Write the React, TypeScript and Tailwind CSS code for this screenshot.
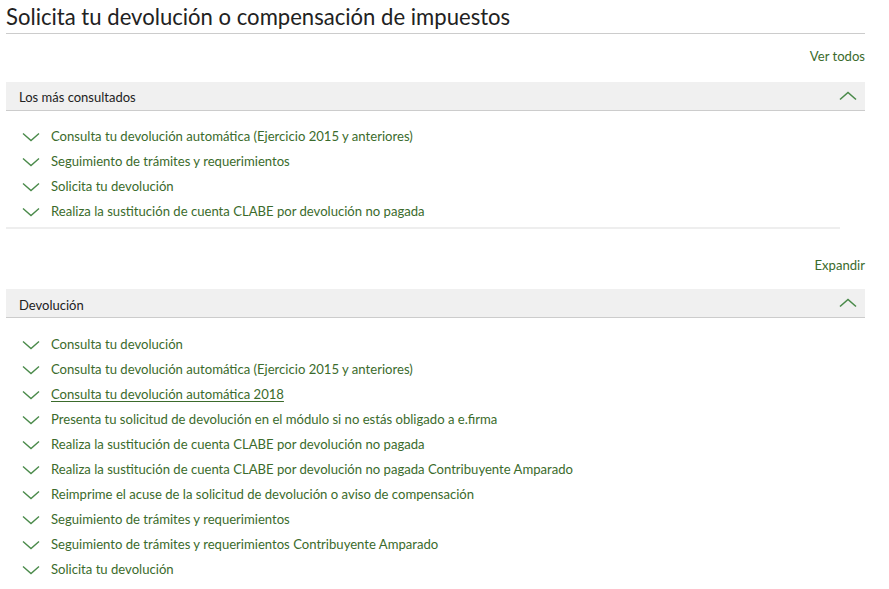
const masConsultados = [
  'Consulta tu devolución automática (Ejercicio 2015 y anteriores)',
  'Seguimiento de trámites y requerimientos',
  'Solicita tu devolución',
  'Realiza la sustitución de cuenta CLABE por devolución no pagada',
];

const devolucion = [
  'Consulta tu devolución',
  'Consulta tu devolución automática (Ejercicio 2015 y anteriores)',
  'Consulta tu devolución automática 2018',
  'Presenta tu solicitud de devolución en el módulo si no estás obligado a e.firma',
  'Realiza la sustitución de cuenta CLABE por devolución no pagada',
  'Realiza la sustitución de cuenta CLABE por devolución no pagada Contribuyente Amparado',
  'Reimprime el acuse de la solicitud de devolución o aviso de compensación',
  'Seguimiento de trámites y requerimientos',
  'Seguimiento de trámites y requerimientos Contribuyente Amparado',
  'Solicita tu devolución',
];

function ChevronDown() {
  return (
    <svg width="18" height="10" viewBox="0 0 18 10" className="shrink-0">
      <path d="M1 1.5 L9 8.5 L17 1.5" fill="none" stroke="#4a8a4a" strokeWidth="1.4" />
    </svg>
  );
}

function ChevronUp() {
  return (
    <svg width="18" height="10" viewBox="0 0 18 10">
      <path d="M1 8.5 L9 1.5 L17 8.5" fill="none" stroke="#4a8a4a" strokeWidth="1.6" />
    </svg>
  );
}

function Section({ title, items, underline }: { title: string; items: string[]; underline?: number }) {
  return (
    <div>
      <div className="flex items-center justify-between h-[29px] bg-[#f0f0f0] border-b border-[#cccccc] pl-[13px] pr-[8px]">
        <span className="mt-[5px] text-[13px] text-[#222]">{title}</span>
        <ChevronUp />
      </div>
      <ul className="pt-[14px] pb-[2px]">
        {items.map((item, i) => (
          <li key={i} className="flex items-center h-[25px] pl-[16px]">
            <ChevronDown />
            <span
              className={`ml-[11px] text-[13.1px] text-[#3b6b2c] ${i === underline ? 'underline underline-offset-2' : ''}`}
            >
              {item}
            </span>
          </li>
        ))}
      </ul>
    </div>
  );
}

export default function App() {
  return (
    <div className="bg-white w-[889px] h-[589px] overflow-hidden px-[6px] pr-[24px]" style={{ fontFamily: 'Lato, "Open Sans", sans-serif' }}>
      <h1 className="text-[22.1px] leading-[32px] text-[#222] pt-[1px] border-b border-[#cccccc]">
        Solicita tu devolución o compensación de impuestos
      </h1>
      <div className="text-right text-[13.1px] text-[#3b6b2c] mt-[13px] mb-[15px]">Ver todos</div>
      <Section title="Los más consultados" items={masConsultados} />
      <div className="h-[2px] bg-[#eeeeee] mr-[25px]" />
      <div className="text-right text-[13.1px] text-[#3b6b2c] mt-[27px] mb-[14px]">Expandir</div>
      <Section title="Devolución" items={devolucion} underline={2} />
    </div>
  );
}
